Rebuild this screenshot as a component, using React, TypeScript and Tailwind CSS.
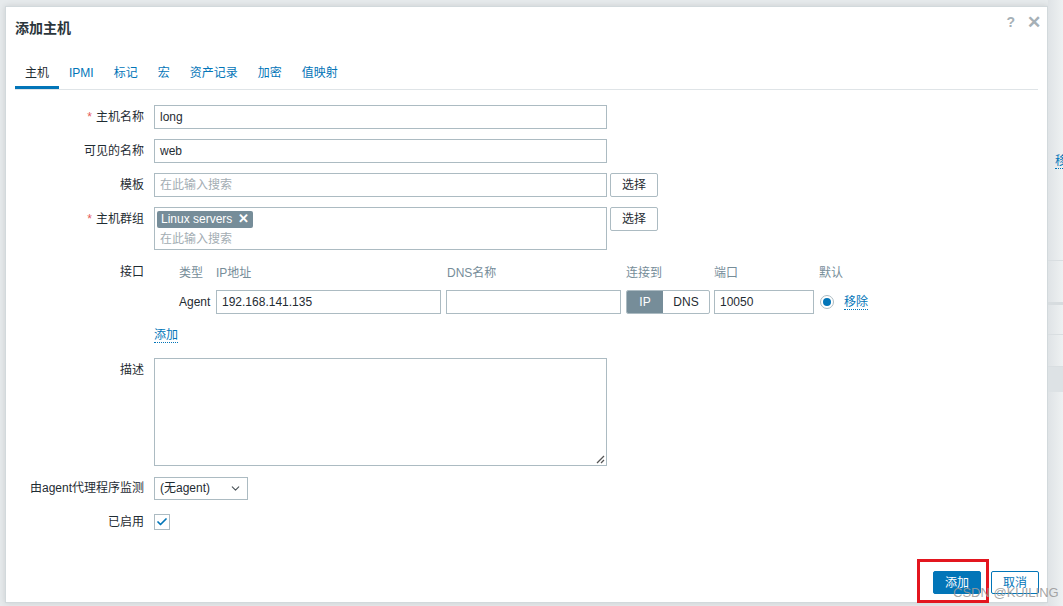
import { Check, ChevronDown } from 'lucide-react'

const tabs = ['主机', 'IPMI', '标记', '宏', '资产记录', '加密', '值映射']

const Label = ({ text, required }: { text: string, required?: boolean }) => (
    <div className="w-[139px] shrink-0 pr-[10px] text-right leading-[24px] text-[#1f2c33] whitespace-nowrap">
        {required && <span className="text-[#e45959] mr-[4px]">*</span>}
        {text}
    </div>
)

const Field = ({ value, placeholder, width }: { value?: string, placeholder?: string, width: string }) => (
    <div className={`${width} h-[24px] border border-[#acbbc2] bg-white px-[5px] flex items-center text-[#1f2c33]`}>
        {value ?? <span className="text-[#a3adb3]">{placeholder}</span>}
    </div>
)

const SelectButton = () => (
    <button className="ml-[3px] w-[48px] h-[24px] border border-[#acbbc2] rounded-[2px] bg-white text-[#1f2c33] flex items-center justify-center">
        选择
    </button>
)

export default function App() {
    return (
        <div className="relative w-[1063px] h-[606px] overflow-hidden bg-[#e6eaec] text-[12px] font-['Liberation_Sans','Noto_Sans_CJK_SC',sans-serif] flex pt-[6px] pl-[5px]">
            {/* dialog */}
            <div className="w-[1043px] h-[597px] bg-white border border-[#d2d9dc] shadow-[0_0_6px_rgba(0,0,0,0.12)] flex flex-col shrink-0">
                <div className="relative pl-[9px] pt-[13px] h-[53px]">
                    <h1 className="text-[14px] font-bold leading-[16px] text-[#2b363c]">添加主机</h1>
                    <div className="absolute right-[6px] top-[5px] flex items-center gap-[12px] text-[#a6b0b6]">
                        <span className="text-[14px] font-bold">?</span>
                        <span className="text-[17px] font-bold leading-none">✕</span>
                    </div>
                </div>

                <div className="mx-[9px] flex border-b border-[#dfe4e7]">
                    {tabs.map((t, i) => (
                        <div key={t} className={`h-[29px] px-[10px] flex items-center border-b-[3px] ${i === 0 ? 'border-[#0275b8] text-[#1f2c33]' : 'border-transparent text-[#0275b8]'}`}>
                            {t}
                        </div>
                    ))}
                </div>

                <div className="pl-[9px] pt-[15px] flex flex-col">
                    <div className="flex">
                        <Label text="主机名称" required />
                        <Field value="long" width="w-[453px]" />
                    </div>
                    <div className="flex mt-[10px]">
                        <Label text="可见的名称" />
                        <Field value="web" width="w-[453px]" />
                    </div>
                    <div className="flex mt-[10px]">
                        <Label text="模板" />
                        <Field placeholder="在此输入搜索" width="w-[453px]" />
                        <SelectButton />
                    </div>
                    <div className="flex mt-[10px] items-start">
                        <Label text="主机群组" required />
                        <div className="w-[453px] h-[43px] border border-[#acbbc2] px-[2px] pt-[2px]">
                            <span className="inline-flex items-center h-[17px] px-[4px] rounded-[2px] bg-[#768d99] text-white">
                                Linux servers
                                <span className="ml-[6px] font-bold text-[13px]">✕</span>
                            </span>
                            <div className="pl-[3px] mt-[2px] leading-[18px] text-[#a3adb3]">在此输入搜索</div>
                        </div>
                        <SelectButton />
                    </div>

                    {/* interfaces */}
                    <div className="flex mt-[10px] items-start">
                        <Label text="接口" />
                        <div className="flex flex-col">
                            <div className="pl-[25px] h-[24px] mt-[1px] flex items-center text-[#768d99]">
                                <span className="w-[37px]">类型</span>
                                <span className="w-[231px]">IP地址</span>
                                <span className="w-[179px]">DNS名称</span>
                                <span className="w-[88px]">连接到</span>
                                <span className="w-[105px]">端口</span>
                                <span>默认</span>
                            </div>
                            <div className="pl-[25px] mt-[5px] flex items-center">
                                <span className="w-[37px] text-[#1f2c33]">Agent</span>
                                <Field value="192.168.141.135" width="w-[225px]" />
                                <div className="ml-[5px]"><Field value="" width="w-[175px]" /></div>
                                <div className="ml-[5px] flex h-[24px] w-[84px] border border-[#acbbc2] rounded-[2px] overflow-hidden">
                                    <span className="w-[36px] bg-[#768d99] text-white flex items-center justify-center">IP</span>
                                    <span className="flex-1 text-[#1f2c33] flex items-center justify-center">DNS</span>
                                </div>
                                <div className="ml-[4px]"><Field value="10050" width="w-[100px]" /></div>
                                <span className="ml-[6px] w-[14px] h-[14px] rounded-full border border-[#acbbc2] flex items-center justify-center">
                                    <span className="w-[8px] h-[8px] rounded-full bg-[#0275b8]" />
                                </span>
                                <span className="ml-[10px] text-[#0275b8] border-b border-dotted border-[#0275b8] leading-[14px]">移除</span>
                            </div>
                            <div className="h-[24px] mt-[9px] flex items-center">
                                <span className="text-[#0275b8] border-b border-dotted border-[#0275b8] leading-[14px]">添加</span>
                            </div>
                        </div>
                    </div>

                    <div className="flex mt-[11px] items-start">
                        <Label text="描述" />
                        <div className="relative w-[453px] h-[108px] border border-[#acbbc2]">
                            <svg className="absolute right-[1px] bottom-[1px]" width="10" height="10" viewBox="0 0 10 10">
                                <path d="M9 2 L2 9 M9 6 L6 9" stroke="#555" strokeWidth="1.3" />
                            </svg>
                        </div>
                    </div>

                    <div className="flex mt-[10px] items-center">
                        <Label text="由agent代理程序监测" />
                        <div className="w-[94px] h-[23px] border border-[#acbbc2] px-[5px] flex items-center justify-between text-[#1f2c33]">
                            (无agent)
                            <ChevronDown size={13} strokeWidth={2} className="text-[#4a5358]" />
                        </div>
                    </div>

                    <div className="flex mt-[10px] items-center">
                        <Label text="已启用" />
                        <span className="w-[16px] h-[16px] border border-[#acbbc2] flex items-center justify-center">
                            <Check size={12} strokeWidth={3.5} className="text-[#0275b8]" />
                        </span>
                    </div>
                </div>

                <div className="flex-1" />
                <div className="flex justify-end gap-[10px] pr-[8px] pb-[8px]">
                    <button className="w-[48px] h-[23px] rounded-[2px] bg-[#0275b8] text-white border border-[#0275b8]">添加</button>
                    <button className="w-[48px] h-[23px] rounded-[2px] bg-white text-[#0275b8] border border-[#0275b8]">取消</button>
                </div>
            </div>

            {/* page behind the dialog */}
            <div className="flex-1 -mt-[6px] flex flex-col bg-gradient-to-r from-[#dfe3e6] to-[#eef1f2] overflow-hidden">
                <div className="h-[154px]" />
                <span className="ml-[7px] text-[#0275b8] whitespace-nowrap border-b border-dotted border-[#0275b8] leading-[14px] w-fit">移除</span>
                <div className="h-[92px] border-b border-[#d9dee1]" />
                <div className="h-[44px] border-b-[3px] border-[#d7dcdf]" />
                <div className="h-[30px] border-b border-[#d9dee1]" />
                <div className="h-[32px] border-b border-[#d9dee1]" />
                <div className="h-[25px] bg-[#dde2e5]" />
            </div>

            {/* annotations over the screenshot */}
            <div className="absolute left-[917px] top-[559px] w-[72px] h-[44px] border-[3px] border-[#e3161f]" />
            <span className="absolute left-[953px] top-[583px] text-[13px] text-[#9a9a9a]/90 whitespace-nowrap">CSDN @KUILING</span>
        </div>
    )
}
